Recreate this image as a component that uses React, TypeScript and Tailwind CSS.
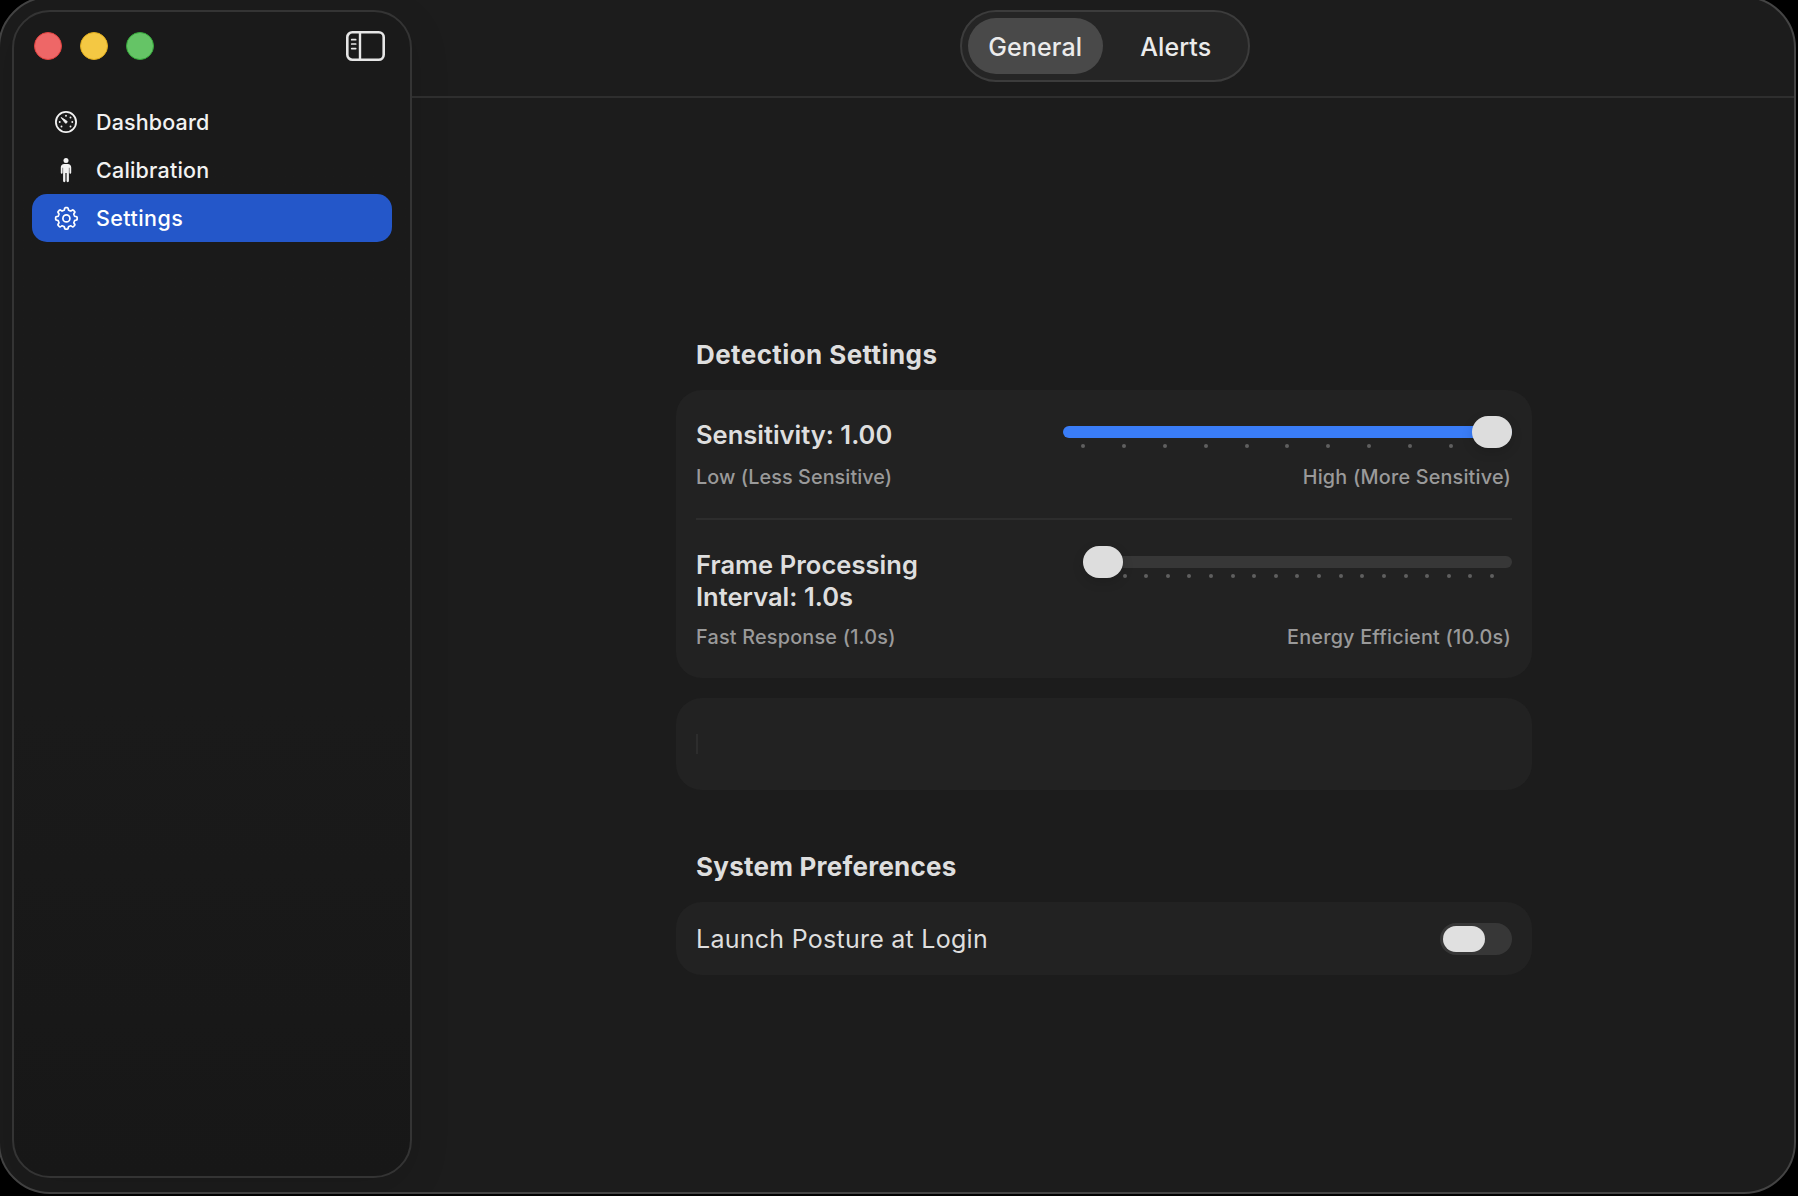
import React from "react";

function SidebarToggleIcon() {
  return (
    <svg width="40" height="32" viewBox="0 0 40 32" fill="none" stroke="#e6e6e6">
      <rect x="1.3" y="2.3" width="36.4" height="27.4" rx="5" strokeWidth="2.6" />
      <path d="M14 2.5V29.5" strokeWidth="2.4" />
      <path d="M5.7 9.7H9.7M5.7 14H9.7M5.7 18.6H9.7" strokeWidth="1.7" strokeLinecap="round" />
    </svg>
  );
}

function GaugeIcon() {
  return (
    <svg width="24" height="24" viewBox="0 0 24 24" fill="none">
      <circle cx="12" cy="12" r="10.1" stroke="#f2f2f2" strokeWidth="1.8" />
      <path d="M7.2 7.5L12.7 11A1.2 1.2 0 0 1 11.1 12.8Z" fill="#f2f2f2" stroke="#f2f2f2" strokeWidth="0.9" strokeLinejoin="round" />
      <g fill="#f2f2f2">
        <circle cx="12" cy="5.7" r="0.95" />
        <circle cx="16.5" cy="7.5" r="0.95" />
        <circle cx="18.3" cy="12" r="0.95" />
        <circle cx="5.7" cy="12" r="0.95" />
        <circle cx="7.5" cy="16.5" r="0.95" />
        <circle cx="16.5" cy="16.5" r="0.95" />
      </g>
    </svg>
  );
}

function FigureIcon() {
  return (
    <svg width="24" height="26" viewBox="0 0 24 26" fill="#f2f2f2">
      <circle cx="12" cy="3.5" r="2.5" />
      <path d="M10.2 6.9H13.8C15.8 6.9 17.2 8.2 17.2 10.2V15.8A0.9 0.9 0 0 1 15.4 15.8V10.8H14.9V24A1.15 1.15 0 0 1 12.6 24V16H11.4V24A1.15 1.15 0 0 1 9.1 24V10.8H8.6V15.8A0.9 0.9 0 0 1 6.8 15.8V10.2C6.8 8.2 8.2 6.9 10.2 6.9Z" />
    </svg>
  );
}

const gearPath =
  Array.from({ length: 160 }, (_, i) => {
    const a = (i / 160) * Math.PI * 2;
    const r = 9.6 + 1.15 * (Math.tanh(3 * Math.cos(8 * a)) / Math.tanh(3));
    return `${i === 0 ? "M" : "L"}${(12.4 + r * Math.sin(a)).toFixed(2)} ${(12.4 - r * Math.cos(a)).toFixed(2)}`;
  }).join("") + "Z";

function GearIcon() {
  return (
    <svg width="24" height="24" viewBox="0 0 24 24" fill="none" stroke="#ffffff" strokeWidth="1.7" strokeLinejoin="round">
      <path d={gearPath} />
      <circle cx="12.4" cy="12.4" r="3.5" />
    </svg>
  );
}

function Ticks({ count, className }: { count: number; className: string }) {
  return (
    <div className={`absolute flex justify-between ${className}`}>
      {Array.from({ length: count }, (_, i) => (
        <span key={i} className="size-1 rounded-full bg-[#5f5f5f]" />
      ))}
    </div>
  );
}

export default function App() {
  return (
    <div className="h-[1196px] w-[1798px] overflow-hidden bg-black font-['Inter',sans-serif] text-[#dedede]">
      <div className="-mt-1 -ml-0.5 flex h-[1198px] w-[1798px] rounded-[52px] border-2 border-[#444444] bg-[#1c1c1c]">
        <aside className="mt-3 ml-3 flex h-[1168px] w-[400px] shrink-0 flex-col rounded-[38px] border-2 border-[#343434] bg-linear-to-b from-[#1a1a1a] from-60% to-[#171717] px-[18px] shadow-[0_10px_40px_rgba(0,0,0,0.12)]">
          <div className="mt-[18px] flex h-8 items-center">
            <div className="ml-0.5 flex gap-[18px]">
              <span className="size-7 rounded-full border border-[#e2423f] bg-[#ee6767]" />
              <span className="size-7 rounded-full border border-[#e0ac1c] bg-[#f4c843]" />
              <span className="size-7 rounded-full border border-[#35aa3a] bg-[#65c466]" />
            </div>
            <div className="mr-1.5 ml-auto">
              <SidebarToggleIcon />
            </div>
          </div>
          <nav className="mt-9 flex flex-col text-[21.5px] font-medium text-[#f2f2f2]">
            <a className="flex h-12 items-center pl-[22px]">
              <GaugeIcon />
              <span className="ml-[18px] tracking-[0.14px]">Dashboard</span>
            </a>
            <a className="flex h-12 items-center pl-[22px]">
              <FigureIcon />
              <span className="ml-[18px] tracking-[0.2px]">Calibration</span>
            </a>
            <a className="flex h-12 items-center rounded-[15px] bg-[#2457c9] pl-[22px] text-white">
              <GearIcon />
              <span className="ml-[18px] tracking-[0.42px]">Settings</span>
            </a>
          </nav>
        </aside>

        <main className="flex min-w-0 flex-1 flex-col">
          <header className="flex h-[100px] justify-center border-b-2 border-[#2e2e2e] pt-3 pl-1">
            <div className="flex h-[72px] w-[290px] rounded-full border-2 border-[#3c3c3c] bg-[#252525] p-1.5 text-[25px] font-medium text-[#ebebeb]">
              <button className="h-14 w-[135px] rounded-full bg-[#494949] pt-[3px] tracking-[0.12px]">General</button>
              <button className="ml-[5px] h-14 w-[135px] pt-[3px] pl-0.5 tracking-[0.05px]">Alerts</button>
            </div>
          </header>

          <div className="ml-[264px] w-[856px]">
            <h2 className="mt-[241px] pl-5 text-[26px] leading-8 font-bold tracking-[0.41px]">Detection Settings</h2>
            <section className="mt-[19px] h-72 rounded-[26px] bg-[#222222] px-5 pt-[29px]">
              <div className="flex justify-between">
                <span className="text-[25.5px] leading-8 font-semibold">Sensitivity: 1.00</span>
                <div className="relative h-8 w-[449px]">
                  <div className="mt-[7px] h-3 rounded-[6px] bg-[#3a7df8]" />
                  <Ticks count={11} className="top-[25px] left-[18px] w-[413px]" />
                  <div className="absolute -top-[3px] right-0 h-8 w-10 rounded-full bg-[#dddddd] shadow-[0_4px_12px_rgba(0,0,0,0.14)]" />
                </div>
              </div>
              <div className="mt-3.5 flex justify-between text-[19.8px] leading-6 font-[450] text-[#9a9a9a]">
                <span className="tracking-[0.08px]">Low (Less Sensitive)</span>
                <span className="mr-px tracking-[0.2px]">High (More Sensitive)</span>
              </div>
              <div className="mt-[29px] h-0.5 bg-[#2d2d2d]" />
              <div className="mt-[29px] flex justify-between">
                <span className="w-[300px] text-[25.5px] leading-8 font-semibold">
                  <span className="block tracking-[0.05px]">Frame Processing</span>
                  <span className="block tracking-[0.03px]">Interval: 1.0s</span>
                </span>
                <div className="relative h-8 w-[429px]">
                  <div className="mt-[7px] h-3 rounded-[6px] bg-[#373737]" />
                  <Ticks count={19} className="top-[25px] left-[18px] w-[393px]" />
                  <div className="absolute -top-[3px] left-0 h-8 w-10 rounded-full bg-[#dddddd] shadow-[0_4px_12px_rgba(0,0,0,0.14)]" />
                </div>
              </div>
              <div className="mt-3 flex justify-between text-[19.8px] leading-6 font-[450] text-[#9a9a9a]">
                <span className="tracking-[0.22px]">Fast Response (1.0s)</span>
                <span className="mr-px tracking-[0.22px]">Energy Efficient (10.0s)</span>
              </div>
            </section>

            <section className="mt-5 flex h-[92px] items-center rounded-[26px] bg-[#222222] px-5">
              <div className="h-5 w-0.5 bg-[#2d2d2d]" />
            </section>

            <h2 className="mt-[61px] pl-5 text-[26px] leading-8 font-bold tracking-[0.23px]">System Preferences</h2>
            <section className="mt-[19px] flex h-[73px] items-center justify-between rounded-[26px] bg-[#222222] px-5">
              <span className="text-[25px] leading-8 font-[430] tracking-[0.26px]">Launch Posture at Login</span>
              <div className="flex h-8 w-[72px] items-center rounded-full bg-[#373737] pl-[3px]">
                <div className="h-[26px] w-[42px] rounded-full bg-[#e0e0e0]" />
              </div>
            </section>
          </div>
        </main>
      </div>
    </div>
  );
}
